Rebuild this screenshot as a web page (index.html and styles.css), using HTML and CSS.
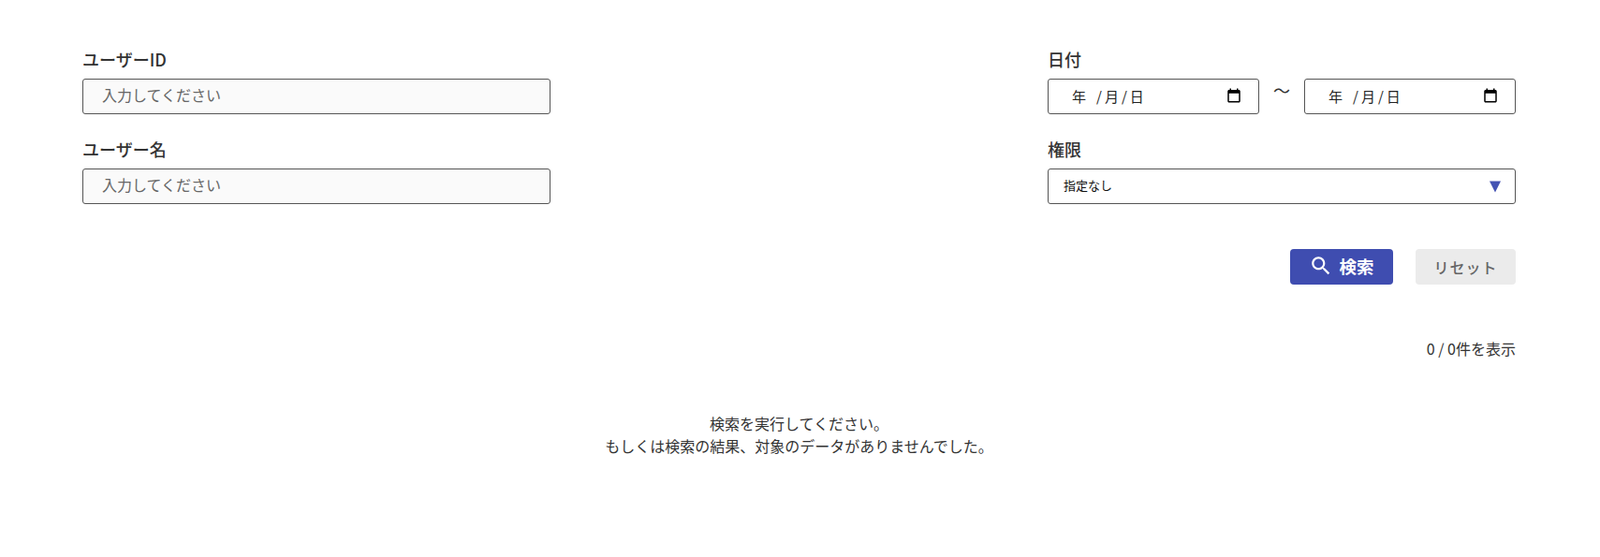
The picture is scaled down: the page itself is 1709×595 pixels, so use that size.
FILE: index.html
```html
<!DOCTYPE html>
<html lang="ja">
<head>
    <meta charset="UTF-8">
    <meta name="viewport" content="width=device-width, initial-scale=1.0">
    <title>ユーザー検索</title>
    <link rel="stylesheet" href="styles.css">
</head>
<body>
    <div class="container">
        <form class="search-form">
            <div class="field-grid">
                <div class="field">
                    <label class="field-label">ユーザーID</label>
                    <input class="text-input" type="text" placeholder="入力してください">
                </div>
                <div class="field">
                    <label class="field-label">日付</label>
                    <div class="date-range">
                        <div class="date-input">
                            <span class="date-text"><span class="date-year">年</span><span class="date-sep">/</span>月<span class="date-sep">/</span>日</span>
                            <svg class="calendar-icon" viewBox="0 0 24 24"><path d="M19 4h-1V2h-2v2H8V2H6v2H5c-1.1 0-2 .9-2 2v14c0 1.1.9 2 2 2h14c1.1 0 2-.9 2-2V6c0-1.1-.9-2-2-2zm0 16H5V9h14v11z"/></svg>
                        </div>
                        <span class="date-tilde">〜</span>
                        <div class="date-input">
                            <span class="date-text"><span class="date-year">年</span><span class="date-sep">/</span>月<span class="date-sep">/</span>日</span>
                            <svg class="calendar-icon" viewBox="0 0 24 24"><path d="M19 4h-1V2h-2v2H8V2H6v2H5c-1.1 0-2 .9-2 2v14c0 1.1.9 2 2 2h14c1.1 0 2-.9 2-2V6c0-1.1-.9-2-2-2zm0 16H5V9h14v11z"/></svg>
                        </div>
                    </div>
                </div>
                <div class="field">
                    <label class="field-label">ユーザー名</label>
                    <input class="text-input" type="text" placeholder="入力してください">
                </div>
                <div class="field">
                    <label class="field-label">権限</label>
                    <div class="select-box">
                        <span>指定なし</span>
                        <svg class="select-arrow" viewBox="0 0 12 12"><path d="M0 0h12L6 12z"/></svg>
                    </div>
                </div>
            </div>
            <div class="button-row">
                <button class="btn btn-primary" type="button">
                    <svg class="search-icon" viewBox="0 0 24 24"><path d="M15.5 14h-.79l-.28-.27C15.41 12.59 16 11.11 16 9.5 16 5.91 13.09 3 9.5 3S3 5.91 3 9.5 5.91 16 9.5 16c1.61 0 3.09-.59 4.23-1.57l.27.28v.79l5 4.99L20.49 19l-4.99-5zm-6 0C7.01 14 5 11.99 5 9.5S7.01 5 9.5 5 14 7.01 14 9.5 11.99 14 9.5 14z"/></svg>
                    検索
                </button>
                <button class="btn btn-reset" type="button">リセット</button>
            </div>
        </form>
        <p class="result-count">0 / 0件を表示</p>
        <p class="empty-message">検索を実行してください。<br>もしくは検索の結果、対象のデータがありませんでした。</p>
    </div>
</body>
</html>
```

FILE: styles.css
```css
body {
    margin: 0;
    background: #fff;
    color: #333;
    font-family: "Noto Sans CJK JP", "Noto Sans", sans-serif;
    font-size: 16px;
}

.container {
    padding: 49px 90px 0 88px;
}

.field-grid {
    display: grid;
    grid-template-columns: 500px 500px;
    justify-content: space-between;
    row-gap: 23px;
}

.field-label {
    display: block;
    font-size: 18px;
    font-weight: 500;
    line-height: 28px;
    margin-bottom: 7px;
}

.text-input {
    display: block;
    box-sizing: border-box;
    width: 100%;
    height: 38px;
    padding: 0 20px 5px;
    border: 1px solid #555;
    border-radius: 3px;
    background: #fafafa;
    font-family: inherit;
    font-size: 16px;
}

.text-input::placeholder {
    color: #666;
}

.date-range {
    display: flex;
    justify-content: space-between;
}

.date-input {
    box-sizing: border-box;
    width: 226px;
    height: 38px;
    padding: 0 17px 2px 25px;
    border: 1px solid #555;
    border-radius: 3px;
    display: flex;
    align-items: center;
    justify-content: space-between;
    color: #222;
    font-size: 15px;
}

.date-year {
    margin-right: 8px;
}

.date-sep {
    margin: 0 3px;
}

.calendar-icon {
    width: 18px;
    height: 18px;
    fill: #000;
}

.date-tilde {
    line-height: 24px;
    font-size: 18px;
}

.select-box {
    box-sizing: border-box;
    height: 38px;
    padding: 0 15px 3px 16px;
    border: 1px solid #555;
    border-radius: 3px;
    display: flex;
    align-items: center;
    justify-content: space-between;
    color: #111;
    font-size: 13px;
}

.select-arrow {
    width: 12px;
    height: 13px;
    margin-top: 3px;
    fill: #4453b3;
}

.button-row {
    display: flex;
    justify-content: flex-end;
    gap: 24px;
    margin-top: 48px;
}

.btn {
    box-sizing: border-box;
    height: 38px;
    border: none;
    border-radius: 4px;
    font-family: inherit;
    font-weight: 700;
    display: flex;
    align-items: center;
    justify-content: center;
}

.btn-primary {
    width: 110px;
    padding: 0 0 2px;
    background: #3f4db0;
    color: #fff;
    font-size: 18.5px;
}

.search-icon {
    width: 26px;
    height: 26px;
    fill: #fff;
    margin-right: 6px;
}

.btn-reset {
    width: 107px;
    background: #ebebeb;
    color: #666;
    font-size: 16px;
    font-weight: 500;
    letter-spacing: 1px;
}

.result-count {
    margin: 55px 0 0;
    text-align: right;
    line-height: 26px;
}

.empty-message {
    margin: 55px 0 0;
    text-align: center;
    line-height: 24px;
}
```
